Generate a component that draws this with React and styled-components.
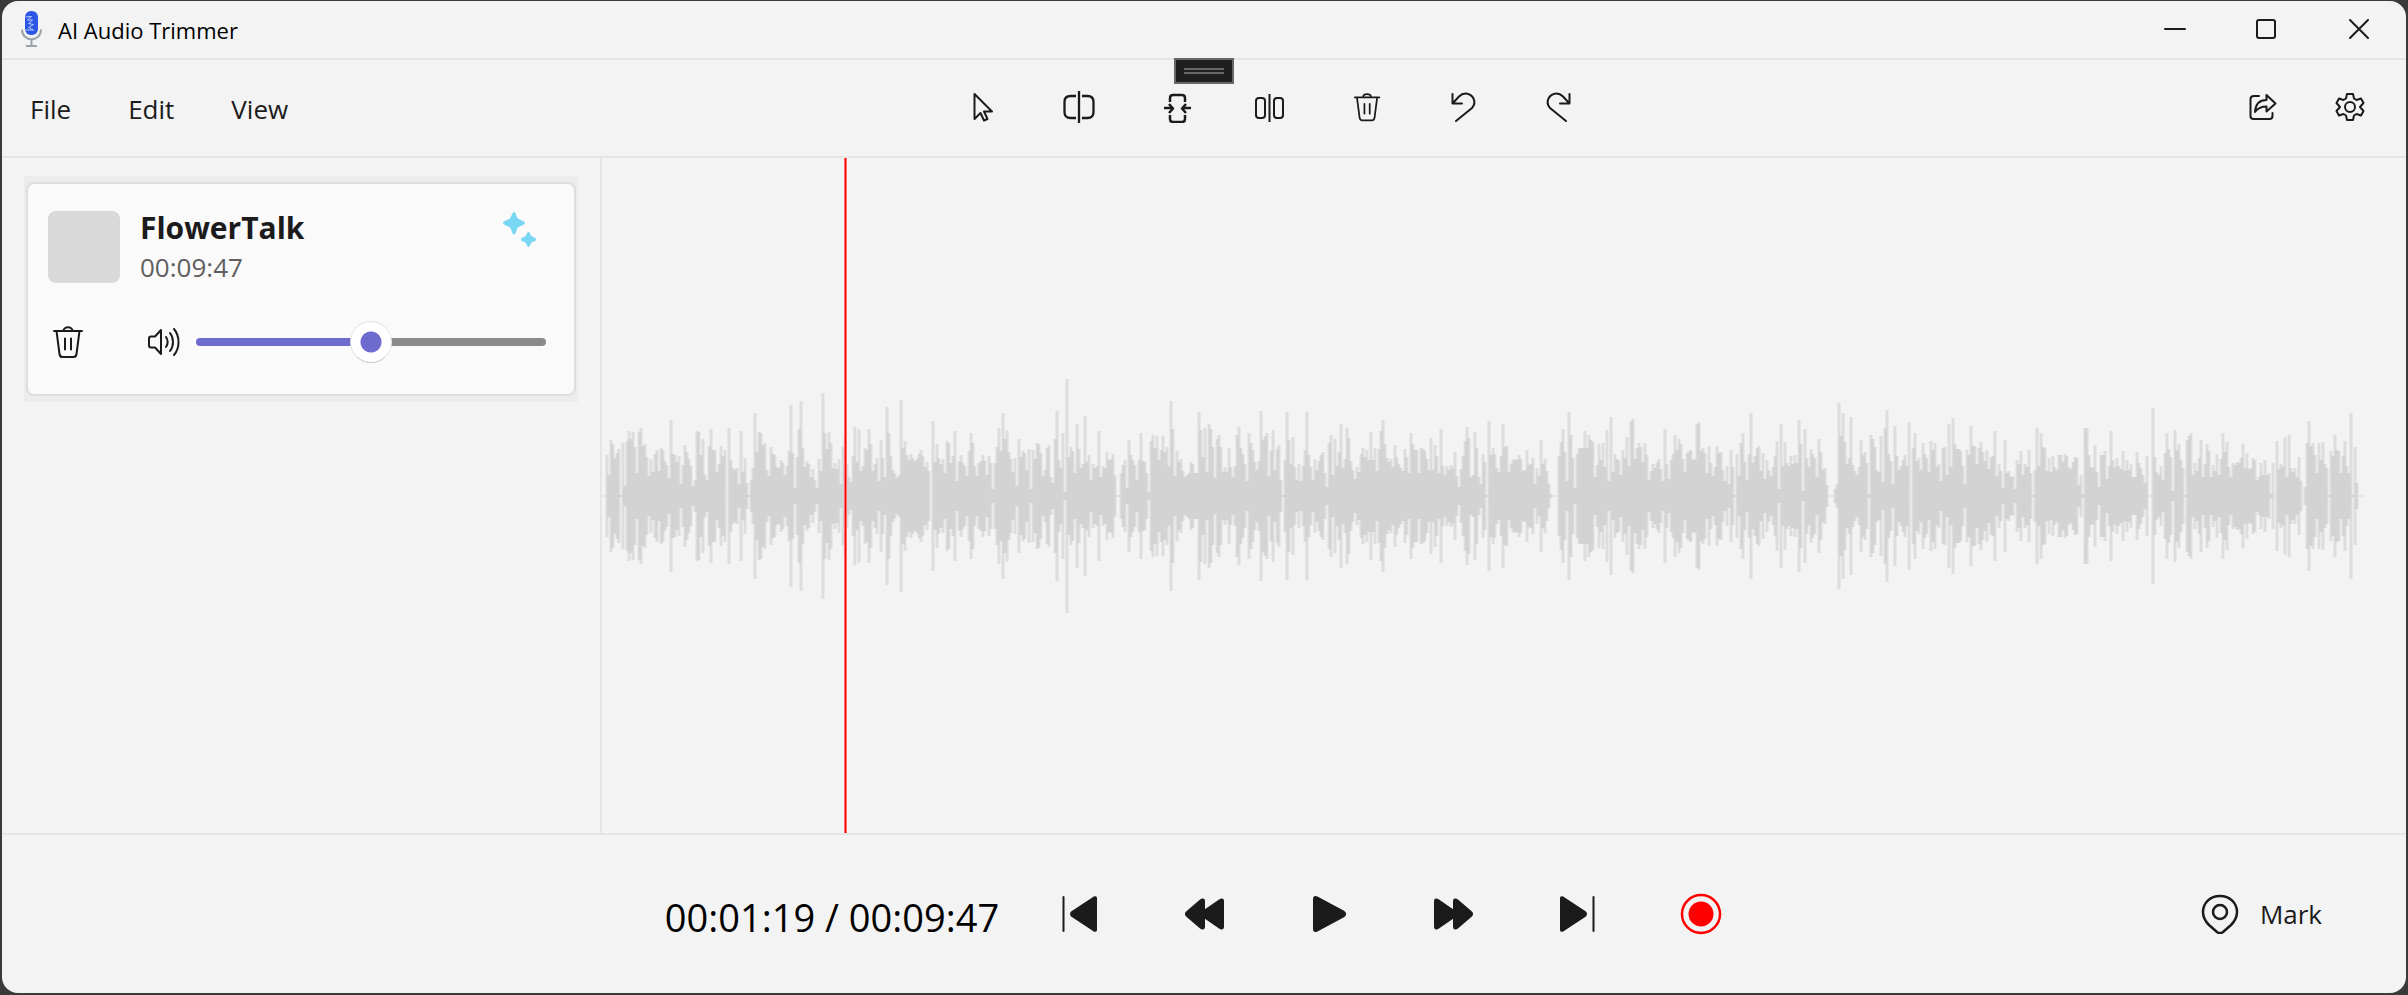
import React from 'react';
import styled, { createGlobalStyle } from 'styled-components';

const Global = createGlobalStyle`
  * { box-sizing: border-box; }
  html, body, #root { height: 100%; margin: 0; }
  body {
    background: #3b3a3b;
    color: #1b1b1b;
    font-family: 'Open Sans', 'Noto Sans', sans-serif;
  }
  button { font: inherit; color: inherit; }
`;

const LINE = '#e5e5e5';

const Desktop = styled.div`
  height: 100%;
  min-height: 720px;
  padding: 1px 2px 2px;
`;
const Window = styled.div`
  position: relative;
  height: 100%;
  display: flex;
  flex-direction: column;
  background: #f3f3f3;
  border-radius: 16px;
  overflow: hidden;
`;
const TitleBar = styled.header`
  height: 59px;
  flex: none;
  display: flex;
  align-items: stretch;
  border-bottom: 2px solid ${LINE};
`;
const AppTitle = styled.h1`
  margin: 0;
  flex: 1;
  display: flex;
  align-items: center;
  gap: 12px;
  padding-left: 14px;
  color: #000;
  font-size: 22px;
  font-weight: 400;
`;
const CaptionButton = styled.button`
  width: 92px;
  padding: 0 2px 2px 0;
  border: 0;
  background: none;
  display: grid;
  place-items: center;
`;
const DockHandle = styled.div`
  position: absolute;
  top: 57px;
  left: 50%;
  width: 60px;
  height: 26px;
  margin-left: -30px;
  display: flex;
  flex-direction: column;
  align-items: center;
  justify-content: center;
  gap: 2px;
  background: #1f1f1f;
  border: 2px solid #686868;
`;
const Grip = styled.span`
  width: 40px;
  height: 2px;
  background: #686868;
`;
const CommandBar = styled.div`
  height: 98px;
  flex: none;
  display: grid;
  grid-template-columns: 1fr auto 1fr;
  align-items: center;
  padding-bottom: 2px;
  border-bottom: 2px solid ${LINE};
`;
const Menus = styled.nav`
  display: flex;
  gap: 33px;
  padding: 4px 0 0 16px;
`;
const MenuButton = styled.button`
  border: 0;
  padding: 0 12px;
  background: none;
  font-size: 26px;
  line-height: 36px;
`;
const Tools = styled.div`
  display: flex;
  gap: 48px;
  padding-left: 134px;
`;
const Actions = styled.div`
  display: flex;
  justify-content: flex-end;
  gap: 40px;
  padding-right: 32px;
`;
const IconButton = styled.button`
  width: 48px;
  height: 48px;
  flex: none;
  padding: 0;
  border: 0;
  background: none;
  display: grid;
  place-items: center;
`;
const Body = styled.main`
  flex: 1;
  min-height: 0;
  display: flex;
`;
const Sidebar = styled.aside`
  width: 600px;
  flex: none;
  padding: 18px 22px;
  border-right: 2px solid ${LINE};
`;
const TrackSlot = styled.div`
  padding: 6px 2px;
  background: #ececec;
`;
const TrackCard = styled.article`
  height: 214px;
  padding: 27px 28px 0 20px;
  border: 2px solid #dedede;
  border-radius: 8px;
  background: #fafafa;
`;
const TrackHead = styled.div`
  display: flex;
  align-items: flex-start;
  gap: 20px;
`;
const Cover = styled.div`
  width: 72px;
  height: 72px;
  border-radius: 8px;
  background: #d9d9d9;
`;
const TrackText = styled.div`
  flex: 1;
`;
const TrackName = styled.h2`
  margin: 0;
  font-size: 30px;
  line-height: 34px;
  font-weight: 700;
`;
const TrackLength = styled.p`
  margin: 0;
  color: #5f5f5f;
  font-size: 26px;
  line-height: 44px;
`;
const EnhanceButton = styled(IconButton)`
  height: 38px;
  margin-right: 2px;
`;
const TrackControls = styled.div`
  display: flex;
  align-items: center;
  margin-top: 29px;
`;
const DeleteTrack = styled(IconButton)`
  width: 40px;
`;
const VolumeLabel = styled.label`
  width: 32px;
  height: 32px;
  margin: 0 16px 0 60px;
`;
const Volume = styled.input`
  flex: 1;
  min-width: 0;
  height: 44px;
  margin: 0;
  appearance: none;
  background: none;
  &::-webkit-slider-runnable-track {
    height: 8px;
    border-radius: 4px;
    background: linear-gradient(to right, #6e6bcf 50%, #8a8a8a 50%);
  }
  &::-webkit-slider-thumb {
    appearance: none;
    width: 42px;
    height: 42px;
    margin-top: -17px;
    border: 1px solid #e4e4e4;
    border-bottom-color: #c8c8c8;
    border-radius: 50%;
    background: radial-gradient(circle, #6e6bcf 10px, #fff 11px);
  }
`;
const Timeline = styled.section`
  position: relative;
  flex: 1;
  min-width: 0;
  display: flex;
  align-items: center;
  padding-right: 42px;
`;
const Wave = styled.svg`
  width: 100%;
  height: 240px;
  display: block;
`;
const Playhead = styled.div`
  position: absolute;
  top: 0;
  bottom: 0;
  left: 242px;
  width: 3px;
  background: #f00;
  border: solid #ff6b6b;
  border-width: 0 1px;
`;
const Transport = styled.footer`
  height: 160px;
  flex: none;
  display: grid;
  grid-template-columns: 1fr auto 1fr;
  align-items: center;
  border-top: 2px solid ${LINE};
`;
const Player = styled.div`
  grid-column: 2;
  display: flex;
  align-items: center;
  gap: 58px;
  padding-right: 18px;
`;
const Clock = styled.output`
  padding-top: 6px;
  color: #000;
  font-size: 38px;
  line-height: 52px;
  white-space: nowrap;
`;
const TransportButtons = styled.div`
  display: flex;
  gap: 76px;
`;
const MarkArea = styled.div`
  display: flex;
  justify-content: flex-end;
  padding-right: 84px;
`;
const MarkButton = styled.button`
  display: flex;
  align-items: center;
  gap: 20px;
  padding: 0;
  border: 0;
  background: none;
  font-size: 26px;
`;
const Glyph = styled.svg`
  display: block;
  fill: ${(p) => (p.$solid ? '#1b1b1b' : 'none')};
  stroke: #1b1b1b;
  stroke-width: ${(p) => p.$weight || 2};
  stroke-linecap: round;
  stroke-linejoin: round;
`;

const Icon = ({ size = 32, solid, weight, children }) => (
  <Glyph width={size} height={size} viewBox={`0 0 ${size} ${size}`} $solid={solid} $weight={weight} aria-hidden="true">
    {children}
  </Glyph>
);

const TrashShape = () => (
  <path d="M2 5h28M11.500 5c0-5 9-5 9 0M4.500 5l3 23c.3 2 1 3 3 3h11c2 0 2.700-1 3-3l3-23M13 12.500v11M19 12.500v11" />
);

const TOOLS = [
  ['Select', <path d="M7.500 3v25l6-6 3.500 7.500 3.500-1.500-3.500-7.500H25z" />],
  ['Split', <path strokeWidth="2.300" strokeLinecap="butt" d="M16 0v32M13 5H7.500C3.500 5 1.500 7 1.500 11v10c0 4 2 6 6 6H13M19 5h5.500c4 0 6 2 6 6v10c0 4-2 6-6 6H19" />],
  ['Trim', <path strokeWidth="2.500" strokeLinecap="butt" d="M11 11V7c0-2 1-3 3-3h9c2 0 3 1 3 3v4M11 24v4c0 2 1 3 3 3h9c2 0 3-1 3-3v-4M5 17h8M10 13l4 4.500-4 4.500M32 17h-8M27 13l-4 4.500 4 4.500" />],
  ['Separate', <><path d="M14.500 3v28" strokeLinecap="butt" /><rect x="1" y="7" width="9" height="20" rx="3" /><rect x="19" y="7" width="9" height="20" rx="3" /></>],
  ['Delete', <g transform="translate(2 2) scale(.88)"><TrashShape /></g>],
  ['Undo', <path d="M5.500 3v9.500H15M5.500 12.500l6.500-7c5-5 12-3 14.500 2 1.800 4 .8 7-1.500 9.500L9 30" />],
  ['Redo', <path d="M26.500 3v9.500H17M26.500 12.500l-6.500-7c-5-5-12-3-14.500 2-1.800 4-.8 7 1.500 9.500L23 30" />],
];

const PREV = <><path d="M1.500 4v34" /><path d="M34 5v32c0 1-1 1-2 .500L10 23c-1.300-1-1.300-3 0-4L32 4.500c1-.5 2-.5 2 .500z" /></>;
const REWIND = <path d="M20 8v10L36 7c1.500-1 3-.5 3 1v26c0 1.500-1.500 2-3 1L20 24v10c0 1.500-1.500 2-3 1L3 23c-1.500-1-1.500-3 0-4L17 7c1.500-1 3-.5 3 1z" />;

const TRANSPORT = [
  ['Previous', <g transform="translate(2 0)">{PREV}</g>],
  ['Rewind', <g>{REWIND}</g>],
  ['Play', <path d="M6 6v30c0 2 1 2.500 3 1.500l27-14.500c1.500-1 1.500-3 0-4L9 4.500C7 3.500 6 4 6 6z" />],
  ['Fast forward', <g transform="matrix(-1 0 0 1 42 0)">{REWIND}</g>],
  ['Next', <g transform="matrix(-1 0 0 1 39 0)">{PREV}</g>],
  ['Record', <><circle cx="21" cy="21" r="19" fill="none" stroke="#f00" strokeWidth="2.500" /><circle cx="21" cy="21" r="12.500" fill="#f00" stroke="none" /></>],
];

const PEAKS = [
  41,21,56,52,38,43,47,1,53,10,55,65,57,64,49,23,64,68,50,52,39,20,37,24,42,46,25,48,46,35,31,18,76,42,41,34,40,12,31,51,
  44,37,30,10,16,65,64,41,57,21,16,50,67,46,46,24,32,50,40,46,0,68,36,28,26,28,12,65,24,38,13,1,16,28,83,44,64,63,51,53,
  26,20,49,42,41,29,28,36,33,21,30,45,91,43,8,39,67,95,48,29,35,32,19,27,16,8,37,25,103,63,47,64,53,28,33,27,37,12,49,61,
  32,19,14,40,69,34,67,25,30,48,46,67,52,25,32,38,15,56,38,19,89,63,40,26,23,18,21,96,48,55,41,36,42,38,35,37,42,46,40,29,
  34,25,0,75,34,52,38,32,37,23,55,53,33,40,65,15,35,41,33,30,20,45,63,53,30,20,33,35,41,35,21,40,33,7,33,49,68,45,83,57,
  66,44,37,24,38,10,57,39,45,43,26,47,7,46,37,53,52,43,20,26,48,51,19,13,57,85,36,28,63,4,117,39,49,45,23,72,47,28,32,80,
  34,41,16,32,28,30,65,19,30,28,44,36,37,42,21,1,0,23,31,36,8,56,41,36,31,16,36,63,35,34,23,4,55,61,48,60,36,46,60,44,
  49,30,95,67,20,45,34,37,25,19,21,23,34,32,23,23,84,66,39,68,24,72,67,49,18,57,61,49,24,29,24,48,29,19,30,61,69,48,42,32,
  15,63,53,46,34,26,35,85,56,60,63,20,45,66,26,47,51,16,1,36,84,56,32,59,29,16,32,15,30,46,84,41,29,16,37,26,35,41,44,23,
  9,53,61,21,57,30,44,72,28,37,68,58,35,26,17,29,24,42,48,39,46,36,64,36,48,25,47,65,76,52,38,34,37,29,51,39,32,28,25,47,
  39,23,63,52,46,46,23,48,47,45,37,26,58,26,51,40,23,67,30,21,30,26,31,28,44,20,9,27,40,55,69,58,19,21,64,48,19,12,42,34,
  1,75,41,48,42,28,24,40,72,49,50,24,32,36,37,36,41,37,25,26,46,31,32,38,12,28,20,56,32,37,25,12,2,0,0,0,40,54,67,44,
  15,84,61,38,8,42,48,48,48,65,48,61,56,54,19,31,52,36,53,29,66,15,79,24,42,37,36,21,46,38,59,30,75,77,37,48,53,49,34,53,
  41,16,25,32,28,34,37,27,15,67,32,17,36,42,61,46,57,52,37,24,43,45,46,36,37,72,74,45,48,43,23,50,33,20,29,50,43,44,26,15,
  30,12,46,29,1,42,20,53,63,34,16,42,83,33,40,48,50,25,43,17,36,26,20,29,40,55,7,72,30,54,33,30,40,32,41,33,76,52,5,67,
  38,29,47,42,38,19,57,44,26,28,11,0,0,0,7,12,93,60,83,54,32,38,79,31,25,21,29,56,41,44,33,2,61,57,49,26,24,60,14,68,
  86,42,35,12,70,40,26,30,36,41,30,74,0,48,63,35,38,26,53,42,38,24,55,46,53,29,32,15,48,49,21,72,29,78,52,47,47,45,30,12,
  46,41,70,50,50,32,48,54,44,35,46,27,39,40,65,20,32,25,8,56,23,25,19,20,7,36,32,45,21,32,29,46,23,1,26,68,30,63,49,48,
  25,38,24,40,29,26,41,41,34,42,40,29,27,34,39,38,11,21,2,68,68,41,29,28,51,24,9,41,41,45,17,30,65,36,29,38,30,27,45,25,
  36,26,32,19,19,44,33,28,21,13,40,0,0,88,39,24,21,30,16,43,63,47,39,5,66,46,52,36,28,1,56,60,63,21,33,25,38,56,19,32,
  52,45,19,31,25,42,21,37,63,44,54,29,19,33,31,34,33,38,52,28,43,27,28,38,36,16,19,33,21,36,21,23,2,33,0,55,27,32,29,59,
  19,61,28,24,28,19,39,15,0,9,53,75,50,53,41,23,53,36,54,32,28,1,45,40,61,46,45,23,40,55,30,23,83,1,49,13,
];

const WAVE_WIDTH = 1762;
// Alternate bars go in separate paths so that neighbours blend where they overlap.
const barsPath = (parity) =>
  PEAKS.map((p, i) => (p && i % 2 === parity ? `M${5 + i * 2} ${120 - p}v${p * 2}` : '')).join('');
const silencePath =
  'M0 120h4' +
  PEAKS.map((p, i) => (p === 0 ? `M${4 + i * 2} 120h2` : '')).join('') +
  `M${5 + PEAKS.length * 2} 120H${WAVE_WIDTH}`;

const Waveform = () => (
  <Wave viewBox={`0 0 ${WAVE_WIDTH} 240`} preserveAspectRatio="none" role="img" aria-label="Audio waveform">
    <g fill="none" stroke="#000" strokeOpacity=".09" strokeWidth="3">
      <path d={barsPath(0)} />
      <path d={barsPath(1)} />
      <path d={silencePath} strokeWidth="1" />
    </g>
  </Wave>
);

export default function App() {
  return (
    <Desktop>
      <Global />
      <Window>
        <TitleBar>
          <AppTitle>
            <svg width="30" height="38" viewBox="0 0 30 38" aria-hidden="true">
              <path d="M6 18.500c0 13 19 13 19 0M15.500 28.500v6M10 35h11" fill="none" stroke="#9aa3aa" strokeWidth="2" />
              <rect x="9" y="0" width="13" height="24" rx="6" fill="#2b56e6" />
              <path d="M9.500 6l6-.500-4 3.500h5l-4 3.500 5 1-5 3 5 2.500h-8" fill="none" stroke="#b9c8fb" strokeWidth="1" />
            </svg>
            AI Audio Trimmer
          </AppTitle>
          <CaptionButton aria-label="Minimize"><Icon size={22}><path d="M1 11h20" /></Icon></CaptionButton>
          <CaptionButton aria-label="Maximize"><Icon size={22}><rect x="1" y="2" width="18" height="18" rx="2" /></Icon></CaptionButton>
          <CaptionButton aria-label="Close"><Icon size={22}><path d="M2 2l18 18M20 2L2 20" /></Icon></CaptionButton>
        </TitleBar>
        <CommandBar>
          <Menus>
            <MenuButton>File</MenuButton>
            <MenuButton>Edit</MenuButton>
            <MenuButton>View</MenuButton>
          </Menus>
          <Tools>
            {TOOLS.map(([name, shape]) => (
              <IconButton key={name} aria-label={name}><Icon>{shape}</Icon></IconButton>
            ))}
          </Tools>
          <Actions>
            <IconButton aria-label="Share">
              <Icon>
                <path d="M13 5H8C5.500 5 4.500 6 4.500 8v17c0 2 1 3 3 3h16c2 0 3-1 3-3v-3M20.500 4v5c-7 0-11 4-11.500 12 3-4 6-5.500 11.500-5.500v5l9-8z" />
              </Icon>
            </IconButton>
            <IconButton aria-label="Settings">
              <Icon>
                <circle cx="16" cy="16" r="5" />
                <path d="M13 3h6l1 4.500 2.500 1.500 4.500-1.500 2.500 4.500-3.500 4 3.500 4-2.500 4.500-4.500-1.500-2.500 1.500-1 4.500h-6l-1-4.500L9.500 23 5 24.500 2.500 20 6 16l-3.500-4L5 7.500 9.500 9 12 7.500z" />
              </Icon>
            </IconButton>
          </Actions>
        </CommandBar>
        <Body>
          <Sidebar>
            <TrackSlot>
              <TrackCard>
                <TrackHead>
                  <Cover />
                  <TrackText>
                    <TrackName>FlowerTalk</TrackName>
                    <TrackLength>00:09:47</TrackLength>
                  </TrackText>
                  <EnhanceButton aria-label="Enhance">
                    <svg width="36" height="36" viewBox="0 0 36 36" fill="#7ad7f3" aria-hidden="true">
                      <path d="M12 0c2 0 2.500 5 4 6.500s7 2.500 7 4.500-5.500 3-7 4.500-2 7-4 7-2.500-5.500-4-7-7-2.500-7-4.500 5.500-3 7-4.500 2-6.500 4-6.500zM26.500 20c1.500 0 2 3 3 4s4.500 1.500 4.500 3.500-3.500 2-4.500 3-1.500 4.500-3 4.500-2-3.500-3-4.500-4.500-1-4.500-3 3.500-2.500 4.500-3.500 1.500-4 3-4z" />
                    </svg>
                  </EnhanceButton>
                </TrackHead>
                <TrackControls>
                  <DeleteTrack aria-label="Delete track">
                    <Icon><TrashShape /></Icon>
                  </DeleteTrack>
                  <VolumeLabel htmlFor="volume" aria-label="Volume">
                    <Icon><path d="M1 12.500c0-1.500.5-2 2-2h4l6-6.500v24l-6-6.500H3c-1.500 0-2-.5-2-2zM18 11c2 3 2 7 0 10M22 7c4 5 4 13 0 18M26 3c6 7 6 19 0 26" /></Icon>
                  </VolumeLabel>
                  <Volume id="volume" type="range" min="0" max="100" defaultValue="50" />
                </TrackControls>
              </TrackCard>
            </TrackSlot>
          </Sidebar>
          <Timeline>
            <Waveform />
            <Playhead />
          </Timeline>
        </Body>
        <Transport>
          <Player>
            <Clock>00:01:19 / 00:09:47</Clock>
            <TransportButtons>
              {TRANSPORT.map(([name, shape]) => (
                <IconButton key={name} aria-label={name}><Icon size={42} solid>{shape}</Icon></IconButton>
              ))}
            </TransportButtons>
          </Player>
          <MarkArea>
            <MarkButton>
              <Icon size={40} weight={2.5}>
                <path d="M31 31c4-4 6-8 6-13C37 9 30 2 20 2S3 9 3 18c0 5 2 9 6 13l8 7c2 1.500 4 1.500 6 0z" />
                <circle cx="20" cy="18" r="7" />
              </Icon>
              Mark
            </MarkButton>
          </MarkArea>
        </Transport>
        <DockHandle>
          <Grip />
          <Grip />
        </DockHandle>
      </Window>
    </Desktop>
  );
}
